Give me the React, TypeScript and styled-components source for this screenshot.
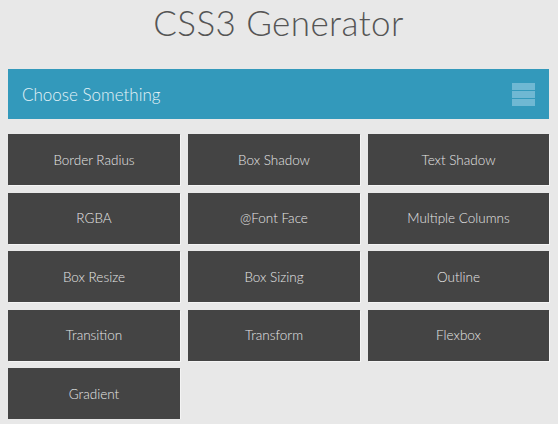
import React from "react";
import styled, { createGlobalStyle } from "styled-components";

const GlobalStyle = createGlobalStyle`
  html, body { margin: 0; padding: 0; background: #e8e8e8; }
  body { font-family: Lato, "Noto Sans", sans-serif; }
`;

const Page = styled.div`
  padding: 0 9px 0 8px;
  display: flex;
  flex-direction: column;
`;

const Title = styled.h1`
  margin: 0;
  height: 69px;
  display: flex;
  align-items: center;
  justify-content: center;
  padding-bottom: 25px;
  box-sizing: border-box;
  font-family: Lato, sans-serif;
  font-weight: 300;
  font-size: 35px;
  color: #555555;
  letter-spacing: 0.4px;
`;

const Header = styled.div`
  height: 50px;
  background: #3399bb;
  display: flex;
  align-items: center;
  justify-content: space-between;
  padding: 0 14px 0 14px;
  box-sizing: border-box;
`;

const HeaderText = styled.span`
  font-weight: 300;
  font-size: 17px;
  color: #e4f3f8;
`;

const MenuIcon = styled.div`
  width: 23px;
  display: flex;
  flex-direction: column;
  gap: 1px;
`;

const MenuBar = styled.div`
  height: 7px;
  background: #6fb8d3;
`;

const Grid = styled.div`
  margin-top: 15px;
  display: grid;
  grid-template-columns: 172px 172px 1fr;
  grid-auto-rows: 51px;
  column-gap: 8px;
  row-gap: 7.5px;
`;

const Tile = styled.div`
  background: #444444;
  box-shadow: 1px 1px 0 #f4f4f4;
  display: flex;
  align-items: center;
  justify-content: center;
  font-weight: 300;
  font-size: 13.5px;
  color: #e6e6e6;
`;

const items = [
  "Border Radius",
  "Box Shadow",
  "Text Shadow",
  "RGBA",
  "@Font Face",
  "Multiple Columns",
  "Box Resize",
  "Box Sizing",
  "Outline",
  "Transition",
  "Transform",
  "Flexbox",
  "Gradient",
];

export default function App() {
  return (
    <>
      <GlobalStyle />
      <Page>
        <Title>CSS3 Generator</Title>
        <Header>
          <HeaderText>Choose Something</HeaderText>
          <MenuIcon>
            <MenuBar />
            <MenuBar />
            <MenuBar />
          </MenuIcon>
        </Header>
        <Grid>
          {items.map((t) => (
            <Tile key={t}>{t}</Tile>
          ))}
        </Grid>
      </Page>
    </>
  );
}
